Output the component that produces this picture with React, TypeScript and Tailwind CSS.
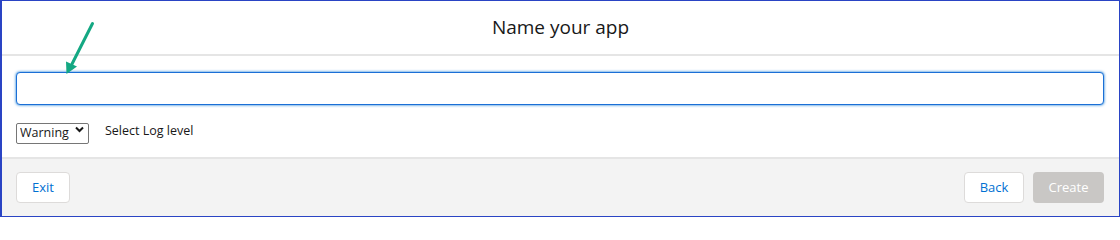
import React from "react";

export default function App() {
  return (
    <div
      className="relative box-border flex h-[217px] w-full flex-col border border-l-2 border-[#2a44c4] bg-white text-[#181818]"
      style={{ fontFamily: '"Open Sans", "Noto Sans", sans-serif' }}
    >
      {/* Header */}
      <div className="flex h-[55px] shrink-0 items-center justify-center border-b-2 border-[#e5e5e5]">
        <h1 className="text-[19px] font-normal text-[#181818]">Name your app</h1>
      </div>

      {/* Body */}
      <div className="flex flex-col gap-4 pt-4 pb-[15px] pl-[14px] pr-[15px]">
        <input
          type="text"
          className="box-border h-[33px] w-full rounded-[4px] border border-[#1b6fd6] bg-white px-3 text-[13px] outline-none shadow-[0_0_3px_#0070d2]"
        />
        <div className="flex h-[21px] items-center gap-4">
          <div className="relative">
            <select
              defaultValue="Warning"
              className="box-border h-[21px] w-[73px] appearance-none rounded-[2px] border border-[#767676] bg-white pl-[3px] pr-4 text-[12.5px] leading-none text-[#181818]"
            >
              <option>Error</option>
              <option>Warning</option>
              <option>Info</option>
              <option>Debug</option>
            </select>
            <svg
              className="pointer-events-none absolute right-[5px] top-[7px] h-[7px] w-[9px]"
              viewBox="0 0 9 7"
              fill="none"
              stroke="#181818"
              strokeWidth={2}
            >
              <path d="M1 1.5l3.5 3.5L8 1.5" />
            </svg>
          </div>
          <span className="text-[12.5px]">Select Log level</span>
        </div>
      </div>

      {/* Footer */}
      <div className="flex flex-1 items-start justify-between border-t-2 border-[#e5e5e5] bg-[#f3f3f3] pt-[13px] pl-[14px] pr-[15px]">
        <button className="h-[31px] w-[54px] rounded-[4px] border border-[#dddbda] bg-white text-[13px] text-[#0070d2]">
          Exit
        </button>
        <div className="flex gap-[9px]">
          <button className="h-[31px] w-[60px] rounded-[4px] border border-[#dddbda] bg-white text-[13px] text-[#0070d2]">
            Back
          </button>
          <button className="h-[31px] w-[71px] rounded-[4px] bg-[#c9c7c5] text-[13px] text-white">
            Create
          </button>
        </div>
      </div>

      {/* Annotation arrow */}
      <svg
        className="pointer-events-none absolute left-0 top-0 h-[80px] w-[120px]"
        viewBox="0 0 120 80"
        fill="none"
      >
        <path d="M90.5 22.5L70 63" stroke="#14a883" strokeWidth={3} strokeLinecap="round" />
        <path d="M64.5 73L64 60.5L75 65.5Z" fill="#14a883" />
      </svg>
    </div>
  );
}
